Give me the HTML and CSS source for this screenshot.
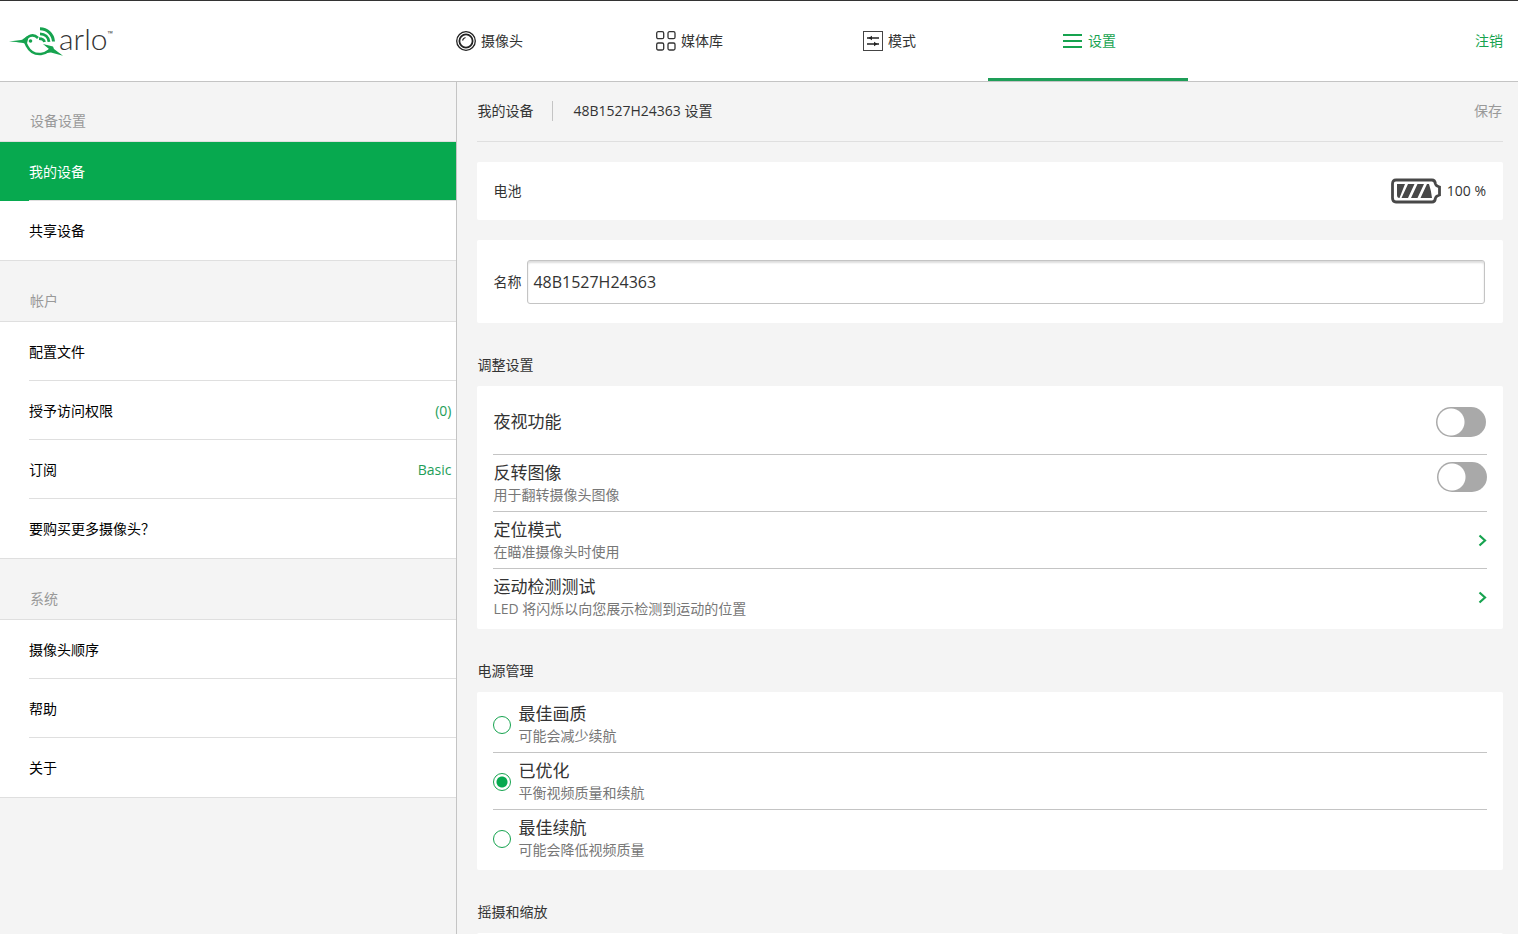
FILE: index.html
```html
<!DOCTYPE html>
<html lang="zh-CN">
<head>
<meta charset="utf-8">
<meta name="viewport" content="width=device-width, initial-scale=1">
<title>Arlo 设置</title>
<link rel="stylesheet" href="styles.css">
</head>
<body>
<header class="header">
  <a class="logo" href="#" aria-label="arlo">
    <svg class="logo-bird" width="54" height="30" viewBox="0 0 54 30" aria-hidden="true">
      <g fill="none" stroke="#16a34f">
        <path d="M29 12C26 9 22 9 19 11C16 13 16 17 18 20C21 26 26 28.500 32 28C37 27.500 39 25 42 23" stroke-width="2.600"/>
        <path d="M31 2.800C38 2.800 44 8 44.500 15.500" stroke-width="3"/>
        <path d="M31 7.800C36 7.800 39.500 11 40 15.800" stroke-width="2.800"/>
        <path d="M30 12.600C33 12.600 35 13.500 35.500 16" stroke-width="2.800"/>
      </g>
      <path fill="#16a34f" d="M0 15.500L12 14C15 13.500 16 10.500 20 9.500L17.500 19C16 16.500 11 16.500 0 15.500ZM34 18L44 20.500L45 23L54 29.700L42 26.500L37 27L40 23Z"/>
      <circle cx="21.500" cy="15" r="1.800" fill="#16a34f"/>
    </svg>
    <span class="logo-word">arlo</span><span class="logo-tm">™</span>
  </a>
  <nav class="tabs">
    <a class="tab" href="#">
      <svg width="20" height="20" viewBox="0 0 20 20" fill="none" stroke="#222" aria-hidden="true">
        <circle cx="10" cy="10" r="9.300" stroke-width="1.300"/><circle cx="10" cy="10" r="6.600" stroke-width="1.800"/><path d="M6.500 9.500A4 4 0 0 1 9.500 6.500" stroke-width="1.200"/>
      </svg>摄像头</a>
    <a class="tab" href="#">
      <svg width="20" height="20" viewBox="0 0 20 20" fill="none" stroke="#333" stroke-width="1.300" aria-hidden="true">
        <rect x=".7" y=".7" width="7" height="7" rx="1.500"/><rect x="12" y=".7" width="7" height="7" rx="1.500"/><rect x=".7" y="12" width="7" height="7" rx="1.500"/><rect x="12" y="12" width="7" height="7" rx="1.500"/>
      </svg>媒体库</a>
    <a class="tab" href="#">
      <svg width="20" height="20" viewBox="0 0 20 20" fill="none" stroke="#444" aria-hidden="true">
        <rect x=".5" y=".5" width="19" height="19"/><path d="M4 7H16M4 13H16" stroke="#222" stroke-width="1.400"/><path d="M9 4.800L5.500 7L9 9.200ZM11 10.800L14.500 13L11 15.200Z" fill="#222" stroke="none"/>
      </svg>模式</a>
    <a class="tab tab-active" href="#" aria-current="page">
      <svg width="20" height="20" viewBox="0 0 20 20" aria-hidden="true"><path d="M0 4H19M0 10H19M0 16H19" stroke="#16a34f" stroke-width="2"/></svg>设置</a>
  </nav>
  <a class="logout" href="#">注销</a>
</header>
<div class="page">
  <aside class="sidebar">
    <h2 class="side-heading">设备设置</h2>
    <ul class="side-list">
      <li class="side-item side-item-active"><a class="side-link" href="#">我的设备</a></li>
      <li class="side-item"><a class="side-link" href="#">共享设备</a></li>
    </ul>
    <h2 class="side-heading">帐户</h2>
    <ul class="side-list">
      <li class="side-item"><a class="side-link" href="#">配置文件</a></li>
      <li class="side-item"><a class="side-link" href="#">授予访问权限<span class="side-value">(0)</span></a></li>
      <li class="side-item"><a class="side-link" href="#">订阅<span class="side-value">Basic</span></a></li>
      <li class="side-item"><a class="side-link" href="#">要购买更多摄像头？</a></li>
    </ul>
    <h2 class="side-heading">系统</h2>
    <ul class="side-list">
      <li class="side-item"><a class="side-link" href="#">摄像头顺序</a></li>
      <li class="side-item"><a class="side-link" href="#">帮助</a></li>
      <li class="side-item"><a class="side-link" href="#">关于</a></li>
    </ul>
  </aside>
  <main class="main">
    <div class="toolbar">
      <a class="crumb" href="#">我的设备</a>
      <h1 class="title">48B1527H24363 设置</h1>
      <button class="save" type="button">保存</button>
    </div>
    <section class="card battery">
      <span>电池</span>
      <span class="battery-level">
        <svg width="50" height="26" viewBox="0 0 50 26" aria-hidden="true">
          <path d="M5 2H41Q44 2 44.500 6Q45 8 48.500 9V17Q45 18 44.500 20Q44 24 41 24H5Q1.500 24 1.500 20V6Q1.500 2 5 2Z" fill="none" stroke="#484848" stroke-width="2.800"/>
          <path d="M6 6H14L8.500 20Q6 20 6 17ZM17 6H23.500L17 20H10.500ZM26.500 6H33L26.500 20H20ZM36 6H38Q40 12 41 20H29.500Z" fill="#484848"/>
        </svg>100 %</span>
    </section>
    <section class="card name">
      <label for="device-name">名称</label>
      <input class="name-input" id="device-name" type="text" value="48B1527H24363">
    </section>
    <h2 class="section-heading">调整设置</h2>
    <section class="card list">
      <div class="row row-single">
        <label class="row-title" for="night">夜视功能</label>
        <input class="toggle" id="night" type="checkbox" role="switch">
      </div>
      <div class="row row-top">
        <label class="row-text" for="flip"><span class="row-title">反转图像</span><span class="row-note">用于翻转摄像头图像</span></label>
        <input class="toggle" id="flip" type="checkbox" role="switch">
      </div>
      <a class="row" href="#">
        <span class="row-text"><span class="row-title">定位模式</span><span class="row-note">在瞄准摄像头时使用</span></span>
        <svg class="chevron" width="9" height="14" viewBox="0 0 9 14" aria-hidden="true"><path d="M1.500 1.500L7 6.500L1.500 11.500" fill="none" stroke="#16a34f" stroke-width="2.200"/></svg>
      </a>
      <a class="row" href="#">
        <span class="row-text"><span class="row-title">运动检测测试</span><span class="row-note">LED 将闪烁以向您展示检测到运动的位置</span></span>
        <svg class="chevron" width="9" height="14" viewBox="0 0 9 14" aria-hidden="true"><path d="M1.500 1.500L7 6.500L1.500 11.500" fill="none" stroke="#16a34f" stroke-width="2.200"/></svg>
      </a>
    </section>
    <h2 class="section-heading">电源管理</h2>
    <section class="card list">
      <div class="row row-option">
        <input class="radio" id="best-quality" type="radio" name="power">
        <label class="row-text" for="best-quality"><span class="row-title">最佳画质</span><span class="row-note">可能会减少续航</span></label>
      </div>
      <div class="row row-option">
        <input class="radio" id="optimized" type="radio" name="power" checked>
        <label class="row-text" for="optimized"><span class="row-title">已优化</span><span class="row-note">平衡视频质量和续航</span></label>
      </div>
      <div class="row row-option">
        <input class="radio" id="best-life" type="radio" name="power">
        <label class="row-text" for="best-life"><span class="row-title">最佳续航</span><span class="row-note">可能会降低视频质量</span></label>
      </div>
    </section>
    <h2 class="section-heading">摇摄和缩放</h2>
    <section class="card list"></section>
  </main>
</div>
</body>
</html>
```
FILE: styles.css
```css
* { box-sizing: border-box; }
body {
  margin: 0;
  height: 100vh;
  overflow: hidden;
  display: flex;
  flex-direction: column;
  background: #f4f4f4;
  color: #333;
  font: 14px/20px "Open Sans", "Noto Sans CJK SC", sans-serif;
}
a { color: inherit; text-decoration: none; }
h1, h2, ul { margin: 0; padding: 0; font: inherit; list-style: none; }
svg { display: block; flex: none; }

.header {
  flex: none;
  display: grid;
  grid-template-columns: minmax(0, 388fr) 800px minmax(0, 330fr);
  height: 82px;
  background: #fff;
  border-top: 1px solid #333;
  border-bottom: 1px solid #c4c4c4;
}
.logo { display: flex; align-items: center; padding-left: 9px; }
.logo-word { margin-left: -4px; padding-bottom: 6px; font: 300 30px/32px Lato, sans-serif; }
.logo-tm { align-self: flex-start; margin-top: 29px; font-size: 7px; line-height: 8px; }
.tabs { display: grid; grid-template-columns: repeat(4, 1fr); }
.tab {
  display: flex;
  align-items: center;
  justify-content: center;
  gap: 5px;
  padding: 3px 0 0 3px;
  border-bottom: 3px solid transparent;
}
.tab-active { color: #16a34f; border-color: #1e9e58; }
.logout { align-self: center; justify-self: end; padding-right: 15px; color: #16a34f; }

.page { flex: 1; min-height: 0; display: flex; }
.sidebar { flex: none; width: calc(30% + 2px); border-right: 1px solid #c4c4c4; }
.side-heading { padding: 30px 30px 10px; color: #999; }
.side-heading:first-child { padding-top: 29px; }
.side-list { background: #fff; border: solid #dfdfdf; border-width: 1px 0; }
.side-item { padding-left: 29px; color: #000; }
.side-link {
  display: flex;
  align-items: center;
  justify-content: space-between;
  height: 59px;
  padding: 1px 5px 0 0;
  border-bottom: 1px solid #dfdfdf;
}
.side-item:last-child .side-link { padding-top: 0; border-bottom: 0; }
.side-item-active { background: #07a94f; color: #fff; }
.side-value { color: #1e9e58; }

.main { flex: 1; min-width: 0; overflow: hidden; padding: 0 15px 20px 20px; }
.toolbar {
  display: flex;
  align-items: center;
  height: 60px;
  margin-bottom: 20px;
  padding-bottom: 2px;
  border-bottom: 1px solid #dfdfdf;
}
.crumb { padding-right: 19px; border-right: 1px solid #c4c4c4; }
.title { padding-left: 20px; }
.save { margin-left: auto; padding: 0 1px; border: 0; background: none; color: #999; font: inherit; }

.card { padding: 0 16px; background: #fff; border-radius: 2px; }
.battery { display: flex; align-items: center; justify-content: space-between; height: 58px; margin-bottom: 20px; }
.battery-level { display: flex; align-items: center; gap: 6px; padding-right: 1px; }
.name { display: flex; align-items: center; gap: 6px; padding: 20px 18px 19px 16px; }
.name-input {
  flex: 1;
  min-width: 0;
  height: 44px;
  padding: 0 5px;
  border: 1px solid #c4c4c4;
  border-radius: 3px;
  box-shadow: inset 0 2px 2px #ddd;
  color: #333;
  font: 16px/22px "Open Sans", "Noto Sans CJK SC", sans-serif;
}
.section-heading { padding: 31px 0 10px; line-height: 22px; }
.list { padding: 4px 16px; }
.row {
  display: flex;
  align-items: center;
  justify-content: space-between;
  padding: 7px 0 5px;
  border-bottom: 1px solid #c4c4c4;
}
.row:last-child { border-bottom: 0; }
.row-single { height: 65px; padding: 0 1px 0 0; }
.row-top { align-items: flex-start; }
.row-option { justify-content: flex-start; gap: 7px; }
.row-text { display: flex; flex-direction: column; }
.row-title { font-size: 17px; line-height: 22px; }
.row-note { color: #777; line-height: 22px; }
.toggle {
  appearance: none;
  width: 50px;
  height: 30px;
  margin: 0;
  border-radius: 15px;
  background: radial-gradient(circle at 15px 15px, #fff 13px, #a9a9a9 14px);
}
.toggle:checked { background: radial-gradient(circle at 35px 15px, #fff 13px, #07a94f 14px); }
.radio {
  appearance: none;
  flex: none;
  width: 18px;
  height: 18px;
  margin: 0;
  border: 1px solid #16a34f;
  border-radius: 50%;
}
.radio:checked { background: radial-gradient(circle, #07a94f 5px, #fff 6px); }
```
